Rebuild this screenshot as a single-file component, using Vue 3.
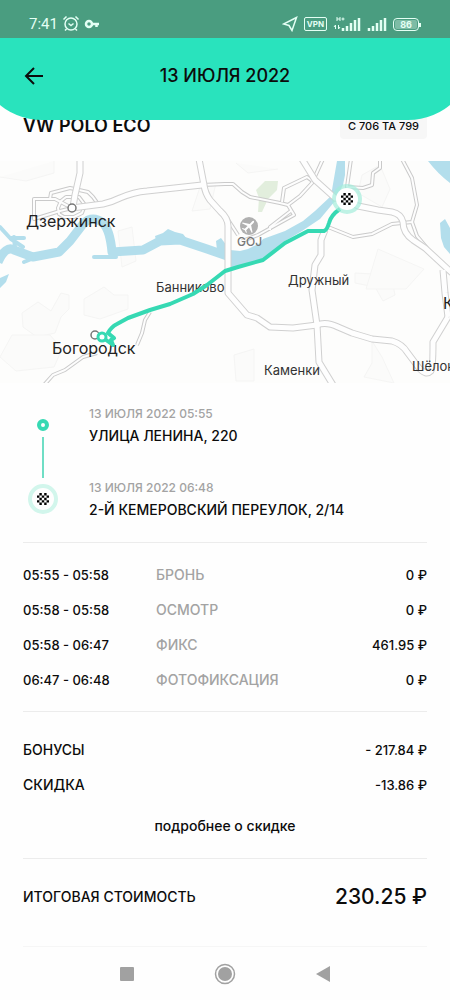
<template>
  <div class="page">
    <header class="header">
      <div class="status-bar">
        <div class="status-group">
          <span class="clock">7:41</span>
          <svg width="18" height="18" viewBox="0 0 18 18" aria-hidden="true">
            <circle class="line" cx="9" cy="9" r="6" />
            <path class="line" d="M1.500 4.500l3-3M16.500 4.500l-3-3M6.500 8.500l2.500 2 2.500-2M4.500 14 3 15.500M13.500 14l1.500 1.500" />
          </svg>
          <svg width="16" height="12" viewBox="0 0 16 12" aria-hidden="true">
            <circle class="thick" cx="5" cy="6" r="3" />
            <path class="thick" d="M8 6h7M12.500 6v3" />
          </svg>
        </div>
        <div class="status-group right">
          <svg width="16" height="16" viewBox="0 0 16 16" aria-hidden="true">
            <path class="line" d="M14.500 1.500 1.500 8l5.500 1.500 3 5z" />
          </svg>
          <span class="vpn">VPN</span>
          <svg width="28" height="16" viewBox="0 0 28 16" aria-hidden="true">
            <path class="hair" d="M4 1v4M7 1v4M4 3h3M8.500 3h3M10 1.500v3M2.500 13V9L1 11M5.500 9v4L7 11" />
            <path class="bars" d="M10 15v-3M14 15v-5M18 15V7M22 15V4M26 15V2" />
          </svg>
          <svg width="20" height="16" viewBox="0 0 20 16" aria-hidden="true">
            <path class="bars" d="M2 15v-3M6 15v-5M10 15V7M14 15V4M18 15V2" />
          </svg>
          <span class="battery"><span class="battery-level">86</span></span>
        </div>
      </div>
      <div class="title-bar">
        <button class="back" type="button" aria-label="Назад">
          <svg width="20" height="20" viewBox="0 0 20 20" aria-hidden="true">
            <path d="M19 10H2M10 2l-8 8 8 8" />
          </svg>
        </button>
        <h1>13 ИЮЛЯ 2022</h1>
      </div>
    </header>

    <main>
      <div class="car">
        <h2>VW POLO ECO</h2>
        <span class="plate">С 706 ТА 799</span>
      </div>

      <svg class="map" viewBox="0 0 450 222">
        <g class="zones">
          <path d="M22 152l16-11 13 9 10-18 8 2v14l-8 8-6 16-18 4-14-10z" />
          <path d="M84 138l20-12 10 8h14v14l-28 10-16-4z" />
          <path d="M12 174h38l12 14-8 18-38 4-16-14z" />
          <path d="M118 70l14-4 4 34-14 6zM192 50l8-24 16-4-6 26zM358 32l4-18 18-10 10 24-8 18z" />
          <path d="M355 112l36 2 4 20-12 6-8-14-20-4zM372 180v22l-8 14 30 6-12-26zM234 194l20-6v32h-18z" />
          <path d="M0 16l26 4 28-8v-12M236 2l12 10 30-4M378 88l46 20-18 20h-40z" />
        </g>
        <path class="park" d="M256 29l9-9 13 0-1 9-9 9-6 13h-4l1-14z" />

        <path class="river" d="M-2 101Q6 84 14 89L33 96 59 91 70 80 80 67Q90 52 103 62 110 69 112 91L143 89 160 80 180 79 207 88 230 96" />
        <path class="stream" d="M94 96h22M24 101l10-4M0 66l10 11 14 0M11 78l12 8M14 76l1 11" />
        <path class="water" d="M155 75l8-3 5-4 7 3 8 2 4 5-12 4-18 1zM216 80l5-3 6 8-1 12-9-8z" />
        <path class="water" d="M337 0h8v14l-2 10-8 16-15 18-18 12-17 10-22 20-33 8-4-4 4-15 10 1 8-2 12-6 3-4 22-8 18-10 12-10 16-15 2-12z" />
        <path class="water" d="M428 0h22v22Q438 13 428 0zM440 62l5-4 5 9v26l-6-7-3-9zM0 117l9-4-3 8-6 6z" />

        <g fill="none" stroke-linejoin="round">
          <path v-for="d in smallRoads" :key="d" class="small-edge" :d="d" />
          <path v-for="d in smallRoads" :key="d" class="small-fill" :d="d" />
          <path v-for="d in mainRoads" :key="d" class="main-edge" :d="d" />
          <path v-for="d in mainRoads" :key="d" class="main-fill" :d="d" />
        </g>

        <circle class="town" cx="72" cy="47" r="4" />
        <circle class="town" cx="95" cy="174" r="4" />
        <circle class="airport" cx="249" cy="65" r="9" />
        <path
          class="plane"
          transform="translate(249 65) rotate(45)"
          d="M0-7q1 0 1 2v3l6 4v1L1 1v4l2 1v1l-3-1-3 1V6l2-1V1l-6 2V2l6-4v-3q0-2 1-2z"
        />
        <text
          v-for="place in places"
          :key="place.name"
          :x="place.x"
          :y="place.y"
          :class="place.kind"
        >{{ place.name }}</text>

        <path class="route" d="M102 176l11 8-2-5 3-2-6-5q3-6 9-9l11-6 22-8 20-6 23-10 14-9 18-14 13-4 25-7 22-17 23-12h16q3-1 5-8 2-8 11-14" />
        <circle class="start" cx="102" cy="176" r="4" />
        <circle class="halo" cx="347" cy="38" r="15" />
        <circle fill="#fff" cx="347" cy="38" r="11" />
        <svg x="341" y="32" width="12" height="12" viewBox="0 0 5 5">
          <path :d="checks" />
        </svg>
      </svg>

      <section class="trip">
        <div class="rail">
          <span class="rail-start"></span>
          <span class="rail-line"></span>
          <span class="rail-end">
            <svg width="12" height="12" viewBox="0 0 5 5" aria-hidden="true">
              <path :d="checks" />
            </svg>
          </span>
        </div>
        <div class="stops">
          <div v-for="stop in stops" :key="stop.time" class="stop">
            <p class="stop-time">{{ stop.time }}</p>
            <p class="stop-address">{{ stop.address }}</p>
          </div>
        </div>
      </section>

      <section class="breakdown">
        <table>
          <tbody>
            <tr v-for="row in periods" :key="row.label">
              <td class="period">{{ row.period }}</td>
              <td class="muted">{{ row.label }}</td>
              <td class="price">{{ row.price }}</td>
            </tr>
          </tbody>
        </table>
      </section>

      <section class="discounts">
        <table>
          <tbody>
            <tr v-for="row in discounts" :key="row.label">
              <td>{{ row.label }}</td>
              <td class="price">{{ row.price }}</td>
            </tr>
          </tbody>
        </table>
        <a class="details" href="#">подробнее о скидке</a>
      </section>

      <section class="total">
        <span>ИТОГОВАЯ СТОИМОСТЬ</span>
        <strong>230.25 ₽</strong>
      </section>
    </main>

    <nav class="system-nav">
      <button type="button" aria-label="Недавние">
        <svg width="14" height="14" viewBox="0 0 14 14"><rect width="14" height="14" rx="1" /></svg>
      </button>
      <button type="button" aria-label="Домой">
        <svg width="22" height="22" viewBox="0 0 22 22">
          <circle class="ring" cx="11" cy="11" r="9.500" />
          <circle cx="11" cy="11" r="7" />
        </svg>
      </button>
      <button type="button" aria-label="Назад">
        <svg width="14" height="16" viewBox="0 0 14 16"><path d="M14 0v16L0 8z" /></svg>
      </button>
    </nav>
  </div>
</template>

<script setup>
// finish flag, black cells of a 5x5 board
const checks = "M1 0h1v1H1zM3 0h1v1H3zM0 1h1v1H0zM2 1h1v1H2zM4 1h1v1H4zM1 2h1v1H1zM3 2h1v1H3zM0 3h1v1H0zM2 3h1v1H2zM4 3h1v1H4zM1 4h1v1H1zM3 4h1v1H3z"

const mainRoads = [
  "M80-2V12L75 34 73 46",
  "M72 47L103 43Q112 41 120 37 134 31 147 30L202 24",
  "M199-2L204 24Q205 32 210 39L220 50Q228 57 228 65V132L247 154 257 157 270 166 293 167 317 164Q326 160 338 166L352 172 372 178 392 180Q402 183 407 191L419 207Q426 215 431 210 433 208 433 181L448 156",
  "M302-2L315 19 335 37 347 39 358 45 378 49 392 51Q401 53 403 61 403 72 413 79L425 87 452 112",
  "M325 69L321 79 321 94 315 104 312 129 317 164 319 201 333 224",
  "M443 109L445 132 448 156",
]

const smallRoads = [
  "M202 24L225 23H233L242 31 250 36 280 42 288 44 300 35 312 22 323-2",
  "M282 41L284 27 307 16 314 21",
  "M288 44L294 54 258 74 242 80M292 49L270 66V69",
  "M225 54L238 74",
  "M351-2L347 26 363 27 372 24 373 12 380 7V-2",
  "M402-2L412 17 417 44 412 61 392 63 372 73 353 76 328 66",
  "M412 61L417 75 427 87",
  "M150 151L145 159 142 172 137 184",
  "M97 192L83 196 65 209 53 214 44 224",
  "M72 47L55 38H34V58L60 50 72 47",
  "M50 38L51 32 70 27 88 31 93 36 98 43",
  "M58 47L61 40 66 36H79L85 44 82 52 74 56H64L59 53Z",
]

const places = [
  { name: "Дзержинск", x: 26, y: 66, kind: "city" },
  { name: "Богородск", x: 52, y: 193, kind: "city" },
  { name: "К", x: 443, y: 148, kind: "city" },
  { name: "Банниково", x: 156, y: 131, kind: "village" },
  { name: "Дружный", x: 288, y: 124, kind: "village" },
  { name: "Каменки", x: 264, y: 214, kind: "village" },
  { name: "Шёлок", x: 412, y: 210, kind: "village" },
  { name: "GOJ", x: 237, y: 85, kind: "code" },
]

const stops = [
  { time: "13 ИЮЛЯ 2022 05:55", address: "УЛИЦА ЛЕНИНА, 220" },
  { time: "13 ИЮЛЯ 2022 06:48", address: "2-Й КЕМЕРОВСКИЙ ПЕРЕУЛОК, 2/14" },
]

const periods = [
  { period: "05:55 - 05:58", label: "БРОНЬ", price: "0 ₽" },
  { period: "05:58 - 05:58", label: "ОСМОТР", price: "0 ₽" },
  { period: "05:58 - 06:47", label: "ФИКС", price: "461.95 ₽" },
  { period: "06:47 - 06:48", label: "ФОТОФИКСАЦИЯ", price: "0 ₽" },
]

const discounts = [
  { label: "БОНУСЫ", price: "- 217.84 ₽" },
  { label: "СКИДКА", price: "-13.86 ₽" },
]
</script>

<style>
body {
  margin: 0;
  background: #fefefe;
}
</style>

<style scoped>
.page {
  min-height: 100vh;
  display: flex;
  flex-direction: column;
  font-family: Inter, "Open Sans", sans-serif;
  font-size: 14px;
  font-weight: 500;
  line-height: 20px;
  color: #0c0c0c;
}

h1,
h2,
p {
  margin: 0;
}

button {
  padding: 0;
  border: none;
  background: none;
  cursor: pointer;
}

svg {
  display: block;
  flex: none;
}

/* header */
.header {
  position: sticky;
  top: 0;
  z-index: 1;
  overflow: hidden;
}

.header::before {
  content: "";
  position: absolute;
  inset: 0 -24px;
  z-index: -1;
  background: #29e3bd;
  border-radius: 0 0 66px 66px;
}

.status-bar {
  height: 38px;
  box-sizing: border-box;
  padding: 10px 31px 0 29px;
  display: flex;
  justify-content: space-between;
  background: #4a9d80;
  color: #e4fff4;
}

.status-group {
  height: 30px;
  display: flex;
  align-items: center;
  gap: 4px;
}

.status-group.right {
  gap: 6px;
}

.clock {
  font-family: Roboto, sans-serif;
  font-size: 15px;
  font-weight: 400;
}

.line,
.thick,
.hair,
.bars {
  fill: none;
  stroke: currentColor;
  stroke-width: 1.5;
}

.thick {
  stroke-width: 2.5;
}

.hair {
  stroke-width: 1;
}

.bars {
  stroke-width: 2.5;
}

.vpn {
  border: 1px solid currentColor;
  border-radius: 2px;
  padding: 0 2px;
  font-size: 8px;
  font-weight: 700;
  line-height: 12px;
}

.battery {
  position: relative;
  border: 1px solid currentColor;
  border-radius: 4px;
  padding: 1px;
}

.battery::after {
  content: "";
  position: absolute;
  right: -3px;
  top: 4px;
  width: 2px;
  height: 4px;
  background: currentColor;
}

.battery-level {
  display: block;
  width: 22px;
  border-radius: 2px;
  background: #7dbca5;
  font-size: 9px;
  font-weight: 700;
  line-height: 9px;
  text-align: center;
}

.status-bar {
  padding-top: 9px;
}

.title-bar {
  height: 82px;
  box-sizing: border-box;
  padding: 0 24px 6px;
  display: grid;
  grid-template-columns: 40px 1fr 40px;
  align-items: center;
}

.back {
  height: 40px;
}

.back path {
  fill: none;
  stroke: #0c0c0c;
  stroke-width: 2;
}

h1 {
  font-size: 18px;
  font-weight: 500;
  text-align: center;
}

/* car */
.car {
  display: flex;
  justify-content: space-between;
  align-items: center;
  margin-top: -7px;
  padding: 0 23px 22px;
}

h2 {
  font-size: 18px;
  font-weight: 600;
}

.plate {
  padding: 3px 8px;
  border-radius: 4px;
  background: #f7f7f7;
  font-size: 11px;
}

/* map */
.map {
  width: 100%;
  height: auto;
  background: #fdfdfc;
}

.zones {
  fill: #fbfbfa;
  stroke: #f5f5f4;
}

.park {
  fill: #e2eedd;
}

.river,
.stream {
  fill: none;
  stroke: #b3deec;
  stroke-width: 9;
  stroke-linejoin: round;
}

.stream {
  stroke-width: 4;
  stroke-linecap: round;
}

.water {
  fill: #b3deec;
}

.small-edge {
  stroke: #cacaca;
  stroke-width: 4;
}

.small-fill {
  stroke: #fdfdfd;
  stroke-width: 2;
}

.main-edge {
  stroke: #d0d0d0;
  stroke-width: 7;
}

.main-fill {
  stroke: #fefefe;
  stroke-width: 5;
}

.town {
  fill: #fff;
  stroke: #777;
  stroke-width: 1.5;
}

.airport {
  fill: #b0b0b0;
}

.plane {
  fill: #fff;
}

.city {
  font-size: 16px;
  font-weight: 400;
  fill: #222;
}

.village {
  font-size: 13px;
  font-weight: 400;
  fill: #333;
}

.code {
  font-size: 12px;
  fill: #777;
}

.route {
  fill: none;
  stroke: #36d9b3;
  stroke-width: 4;
  stroke-linejoin: round;
}

.start {
  fill: #fff;
  stroke: #36d9b3;
  stroke-width: 3;
}

.halo {
  fill: #a4eddb;
  opacity: 0.7;
}

/* trip */
.trip {
  display: flex;
  gap: 26px;
  padding: 21px 23px 22px;
}

.rail {
  width: 40px;
  box-sizing: border-box;
  padding: 15px 0 6px;
  display: flex;
  flex-direction: column;
  align-items: center;
  gap: 6px;
}

.rail-start {
  width: 4px;
  height: 4px;
  border: 4px solid #36d9b3;
  border-radius: 50%;
}

.rail-line {
  flex: 1;
  width: 2px;
  background: #6fdec5;
}

.rail-end {
  display: flex;
  padding: 5px;
  border: 4px solid #d2f6ec;
  border-radius: 50%;
}

.stops {
  flex: 1;
  display: flex;
  flex-direction: column;
  gap: 32px;
}

.stop-address {
  margin-top: 2px;
}

.stop-time {
  font-size: 12px;
}

.stop-time,
.muted {
  color: #a3a3a3;
}

/* prices */
.breakdown,
.discounts,
.total {
  margin: 0 23px;
  border-top: 1px solid #ececec;
}

.breakdown {
  padding: 14px 0;
}

table {
  width: 100%;
  border-collapse: collapse;
}

td {
  height: 35px;
  padding: 0;
}

.period {
  width: 133px;
}

.period,
.price {
  font-size: 13px;
}

.price {
  text-align: right;
}

.discounts {
  padding: 20px 0 22px;
}

.details {
  display: block;
  margin-top: 14px;
  color: inherit;
  text-align: center;
  text-decoration: none;
}

.total {
  display: flex;
  justify-content: space-between;
  align-items: center;
  padding: 18px 0 29px;
  line-height: 40px;
  border-bottom: 1px solid #f6f6f6;
}

.total strong {
  font-size: 21px;
  font-weight: 500;
}

/* system navigation */
.system-nav {
  height: 53px;
  margin-top: auto;
  display: flex;
  justify-content: center;
  align-items: center;
  gap: 58px;
}

.system-nav button {
  width: 40px;
  height: 40px;
  display: flex;
  justify-content: center;
  align-items: center;
}

.system-nav svg {
  fill: #a1a1a1;
}

.system-nav .ring {
  fill: none;
  stroke: #a1a1a1;
  stroke-width: 1.5;
}
</style>
